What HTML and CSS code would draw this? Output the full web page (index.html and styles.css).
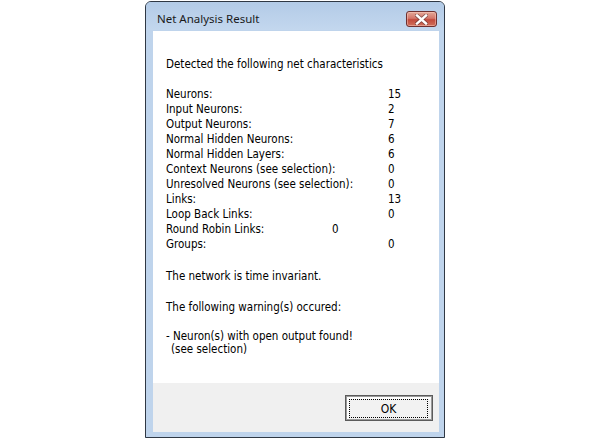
FILE: index.html
```html
<!DOCTYPE html>
<html>
<head>
<meta charset="utf-8">
<link rel="stylesheet" href="styles.css">
</head>
<body>
<div class="window">
  <div class="titlebar">
    <span class="title">Net Analysis Result</span>
    <span class="close">
      <svg width="13" height="11" viewBox="0 0 13 11">
        <path d="M2 1.5 L11 9.5 M11 1.5 L2 9.5" stroke="#4a2a2a" stroke-width="4" stroke-linecap="square" fill="none" opacity="0.55"/>
        <path d="M2 1.5 L11 9.5 M11 1.5 L2 9.5" stroke="#ffffff" stroke-width="2.4" stroke-linecap="square" fill="none"/>
      </svg>
    </span>
  </div>
  <div class="client">
    <div class="content">
      <p class="para">Detected the following net characteristics</p>
      <div class="stats">
        <div class="row"><span class="label">Neurons:</span><span class="value">15</span></div>
        <div class="row"><span class="label">Input Neurons:</span><span class="value">2</span></div>
        <div class="row"><span class="label">Output Neurons:</span><span class="value">7</span></div>
        <div class="row"><span class="label">Normal Hidden Neurons:</span><span class="value">6</span></div>
        <div class="row"><span class="label">Normal Hidden Layers:</span><span class="value">6</span></div>
        <div class="row"><span class="label">Context Neurons (see selection):</span><span class="value">0</span></div>
        <div class="row"><span class="label">Unresolved Neurons (see selection):</span><span class="value">0</span></div>
        <div class="row"><span class="label">Links:</span><span class="value">13</span></div>
        <div class="row"><span class="label">Loop Back Links:</span><span class="value">0</span></div>
        <div class="row"><span class="label label-short">Round Robin Links:</span><span class="value">0</span></div>
        <div class="row"><span class="label">Groups:</span><span class="value">0</span></div>
      </div>
      <p class="para">The network is time invariant.</p>
      <p class="para para-tight">The following warning(s) occured:</p>
      <p class="warn">- Neuron(s) with open output found!<span class="indent">(see selection)</span></p>
    </div>
    <div class="footer">
      <span class="ok"><span class="focus">OK</span></span>
    </div>
  </div>
</div>
</body>
</html>
```
FILE: styles.css
```css
html, body {
  margin: 0;
  padding: 0;
  background: #ffffff;
}
body {
  padding-top: 1px;
}
.window {
  margin-left: 145px;
  width: 298px;
  height: 435px;
  border: 1px solid #2f3844;
  border-radius: 6px 6px 0 0;
  background: #bfd4ec;
  box-shadow: 0 1px 0 #a9dcf2;
  display: flex;
  flex-direction: column;
}
.titlebar {
  height: 22px;
  padding: 6px 7px 0 11px;
  display: flex;
  align-items: center;
  justify-content: space-between;
  background: linear-gradient(#b3cbe7, #c3d7ee);
  border-radius: 5px 5px 0 0;
}
.title {
  font-family: "Noto Sans", "DejaVu Sans", sans-serif;
  font-size: 11.5px;
  color: #1a1a1a;
  margin-top: -2px;
}
.close {
  width: 29px;
  height: 14px;
  border: 1px solid #6e3030;
  border-radius: 3px;
  background: linear-gradient(#e3a898 0%, #d4766a 45%, #c24a3c 55%, #d0705c 100%);
  display: flex;
  align-items: center;
  justify-content: center;
  box-shadow: inset 0 0 0 1px rgba(255,210,200,0.45);
}
.close svg { display: block; }
.client {
  margin: 1px 5px 5px 7px;
  flex: 1;
  display: flex;
  flex-direction: column;
  background: #ffffff;
  font-family: "DejaVu Sans Condensed", "DejaVu Sans", sans-serif;
  font-size: 11.5px;
  color: #000;
}
.content {
  flex: 1;
  padding: 26px 0 0 13px;
}
.para {
  margin: 0 0 16px 0;
  line-height: 15px;
}
.para:first-child {
  margin-bottom: 15px;
}
.para-tight {
  margin-bottom: 15px;
}
.stats {
  margin-bottom: 17px;
}
.row {
  display: flex;
  line-height: 15px;
}
.label {
  width: 222px;
  flex: none;
}
.label-short {
  width: 166px;
}
.warn {
  margin: 0;
  line-height: 13px;
}
.indent {
  display: block;
  padding-left: 5px;
}
.footer {
  height: 49px;
  flex: none;
  background: #f0f0f0;
  display: flex;
  justify-content: flex-end;
  align-items: flex-start;
  padding: 12px 6px 0 0;
  box-sizing: border-box;
}
.ok {
  width: 88px;
  height: 26px;
  box-sizing: border-box;
  border: 1px solid #5b5b5b;
  box-shadow: inset 0 0 0 1px #9a9a9a, inset 1px 1px 0 2px #ffffff;
  background: #f2f2f2;
  display: flex;
  padding: 3px 4px 2px 3px;
}
.focus {
  flex: 1;
  border: 1px dotted #000;
  display: flex;
  align-items: center;
  justify-content: center;
  font-size: 12px;
}
```
